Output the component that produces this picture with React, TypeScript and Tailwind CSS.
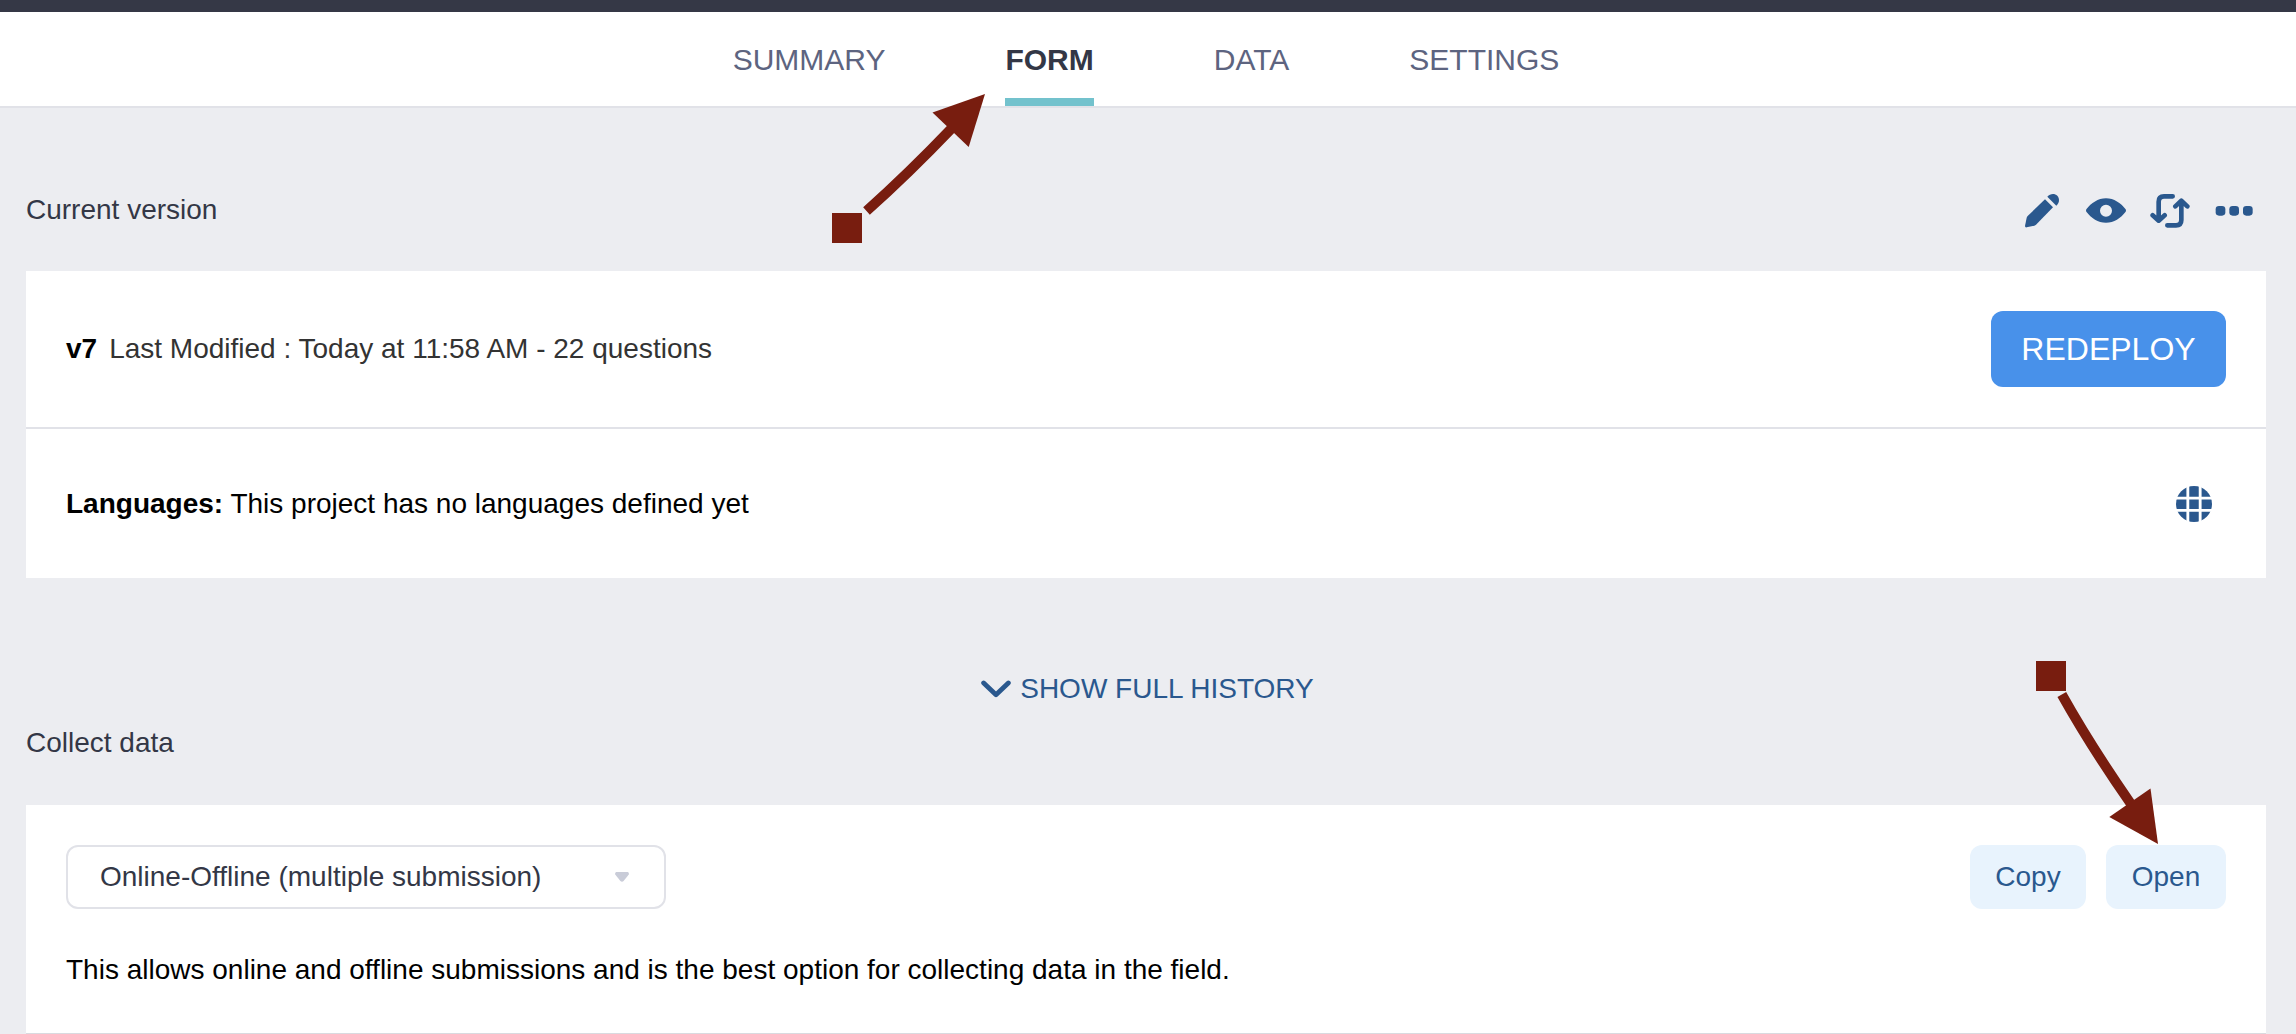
import React from 'react';

const tabs = [
  { label: 'SUMMARY', active: false },
  { label: 'FORM', active: true },
  { label: 'DATA', active: false },
  { label: 'SETTINGS', active: false },
];

function PencilIcon() {
  return (
    <svg className="size-10" viewBox="0 0 120 120" fill="currentColor">
      <path d="M69 25 93 49 42 101Q40 103 37 104L14 109Q9 110 9 105L14 80Q15 77 17 75Z" />
      <path d="M76 17C84 7 98 6 106 14 113 22 113 35 103 44Z" />
    </svg>
  );
}

function EyeIcon() {
  return (
    <svg className="size-10" viewBox="0 0 120 120" fill="currentColor" fillRule="evenodd">
      <path d="M1 55C16 36 36 22 60 22S104 36 119 55Q121 59 119 62C104 81 84 95 60 95S16 81 1 62Q-1 59 1 55ZM60 41a18 18 0 1 0 0 36 18 18 0 0 0 0-36Z" />
    </svg>
  );
}

function ReplaceIcon() {
  return (
    <svg
      className="size-10"
      viewBox="0 0 120 120"
      fill="none"
      stroke="currentColor"
      strokeWidth="14"
      strokeLinecap="round"
      strokeLinejoin="round"
    >
      <path d="M68 16H42Q26 16 26 32V86M8 73 26 89 44 73" />
      <path d="M52 103H78Q94 103 94 87V32M76 46 94 29 112 46" />
    </svg>
  );
}

function MoreIcon() {
  return (
    <svg className="size-10" viewBox="0 0 120 120" fill="currentColor">
      <rect x="5" y="45" width="29" height="29" rx="10" />
      <rect x="46" y="45" width="29" height="29" rx="10" />
      <rect x="87" y="45" width="29" height="29" rx="10" />
    </svg>
  );
}

function GlobeIcon() {
  return (
    <svg className="h-9 w-9" viewBox="0 0 108 108">
      <circle cx="54" cy="54" r="54" fill="#2a588e" />
      <path d="M35.500 0V108M72.500 0V108M0 36.500H108M0 73H108" stroke="#fff" strokeWidth="8.500" />
    </svg>
  );
}

export default function App() {
  return (
    <div className="relative flex h-[1034px] w-[2296px] flex-col overflow-hidden bg-[#ecedf1] font-['Liberation_Sans',Arial,sans-serif] text-[28px] leading-8 text-black">
      <div className="h-3 shrink-0 bg-[#353846]" />
      <nav className="flex h-24 shrink-0 justify-center gap-[120px] border-b-2 border-[#e1e2e8] bg-white pr-1 text-[30px]">
        {tabs.map((t) => (
          <a
            key={t.label}
            className={
              t.active
                ? 'border-b-8 border-[#73c2cd] pt-8 font-bold text-[#333746]'
                : 'pt-8 text-[#5d6480]'
            }
          >
            {t.label}
          </a>
        ))}
      </nav>

      <main className="flex flex-1 flex-col pr-[30px] pl-[26px]">
        <header className="flex h-[163px] shrink-0 items-center justify-between pt-[43px] pr-3 text-[#333746]">
          <h2 className="-mt-[3px]">Current version</h2>
          <div className="flex gap-6 text-[#2a588e]">
            <PencilIcon />
            <EyeIcon />
            <ReplaceIcon />
            <MoreIcon />
          </div>
        </header>

        <section className="bg-white">
          <div className="flex h-[158px] items-center border-b-2 border-[#e1e2e8] px-10">
            <strong className="mr-3">v7</strong>
            <span className="text-[#333]">Last Modified : Today at 11:58 AM - 22 questions</span>
            <button className="ml-auto h-[76px] w-[235px] rounded-xl bg-[#4891ea] text-[32px] text-white">
              REDEPLOY
            </button>
          </div>
          <div className="flex h-[149px] items-center justify-between pr-[54px] pl-10">
            <p>
              <strong>Languages:</strong> This project has no languages defined yet
            </p>
            <GlobeIcon />
          </div>
        </section>

        <button className="mt-[95px] flex items-center justify-center gap-[9px] pl-[3px] text-[#2a588e]">
          <svg
            className="h-[18px] w-[30px]"
            viewBox="0 0 90 54"
            fill="none"
            stroke="currentColor"
            strokeWidth="14.500"
            strokeLinecap="round"
            strokeLinejoin="round"
          >
            <path d="M8 9 45 44 82 9" />
          </svg>
          SHOW FULL HISTORY
        </button>

        <h2 className="mt-[22px] text-[#333746]">Collect data</h2>

        <section className="mt-[46px] h-[229px] border-b border-[#d9dadf] bg-white px-10 pt-10">
          <div className="flex h-16">
            <div className="flex w-[600px] items-center justify-between rounded-xl border-2 border-[#e1e2e8] pr-[35px] pl-8 text-[#333746]">
              <span>Online-Offline (multiple submission)</span>
              <svg className="h-2.5 w-3.5" viewBox="0 0 14 10" fill="#c9ccd8">
                <path d="M1.200 0H12.800Q14 .2 14 2.200L8.600 8.900Q7 10.500 5.400 8.900L0 2.200Q0 .2 1.200 0Z" />
              </svg>
            </div>
            <button className="ml-auto w-[116px] rounded-xl bg-[#e8f3fd] text-[#2a588e]">Copy</button>
            <button className="ml-5 w-[120px] rounded-xl bg-[#e8f3fd] text-[#2a588e]">Open</button>
          </div>
          <p className="mt-[45px]">
            This allows online and offline submissions and is the best option for collecting data in the
            field.
          </p>
        </section>
      </main>

      {/* Annotation arrows floating above the page */}
      <svg
        className="pointer-events-none absolute top-[92px] left-[830px] h-[153px] w-[158px]"
        viewBox="830 92 158 153"
        fill="#781d0f"
      >
        <rect x="832" y="213" width="30" height="30" />
        <path d="M866.500 211Q908 174 952 128" fill="none" stroke="#781d0f" strokeWidth="10" />
        <path d="M985 94 932.500 112.500 968.700 147Z" />
      </svg>
      <svg
        className="pointer-events-none absolute top-[659px] left-[2034px] h-[187px] w-[128px]"
        viewBox="2034 659 128 187"
        fill="#781d0f"
      >
        <rect x="2036" y="661" width="30" height="30" />
        <path d="M2061.800 694.500Q2090 745 2131 804" fill="none" stroke="#781d0f" strokeWidth="10" />
        <path d="M2158 844 2109.300 817 2150.500 788.500Z" />
      </svg>
    </div>
  );
}
